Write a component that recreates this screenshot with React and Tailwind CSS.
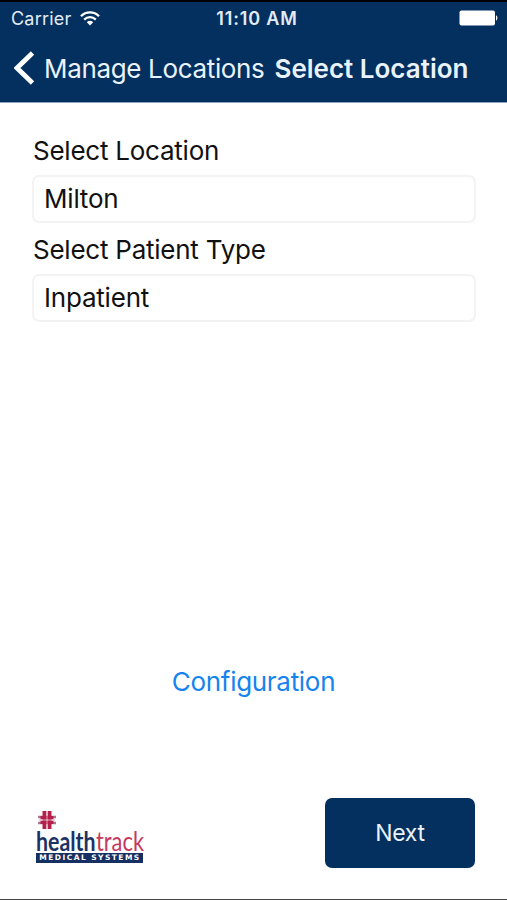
import { useState } from "react";

function StatusBar() {
  return (
    <div className="grid h-[34px] grid-cols-3 items-center border-t-2 border-black pr-[9px] pl-[11px] text-[18px] leading-none text-[#e3ecf5]">
      <div className="flex items-center gap-[9px] pt-px">
        <span className="tracking-[0.2px]">Carrier</span>
        <svg width="20" height="15" viewBox="0 0 20 15" fill="none">
          <path d="M1 5.2C6 0.2 14 0.2 19 5.2" stroke="#fff" strokeWidth="2.3" />
          <path
            d="M4.2 8.6C7.5 5.4 12.5 5.4 15.8 8.6"
            stroke="#fff"
            strokeWidth="2.2"
          />
          <path d="M6.8 11.2C8.6 9.4 11.4 9.4 13.2 11.2L10 14.4Z" fill="#fff" />
        </svg>
      </div>
      <span className="pt-px pl-[5px] text-center font-semibold tracking-[0.85px] whitespace-nowrap">
        11:10 AM
      </span>
      <svg className="justify-self-end" width="39" height="16" viewBox="0 0 39 16">
        <rect x="0.5" y="0.5" width="35.5" height="15" rx="2" fill="#fff" />
        <path d="M37 5.3C38.9 6 38.9 10 37 10.7Z" fill="#fff" />
      </svg>
    </div>
  );
}

function NavBar() {
  return (
    <div className="flex h-[68px] items-center pl-[14px] text-[26px] leading-none whitespace-nowrap text-[#eaf3fc]">
      <button className="flex items-center">
        <svg width="21" height="34" viewBox="0 0 21 34" fill="none">
          <path d="M18.5 2L3 17L18.5 32" stroke="#fff" strokeWidth="4.8" />
        </svg>
        <span className="ml-[9px] pt-px tracking-[-0.34px]">
          Manage Locations
        </span>
      </button>
      <h1 className="ml-[10px] pt-px font-semibold">Select Location</h1>
    </div>
  );
}

function Field({ label, value, onChange }) {
  return (
    <label className="block pb-px">
      <span className="block h-[50px] pt-[10px] pl-px text-[26px] leading-[32px] tracking-[-0.24px]">
        {label}
      </span>
      <input
        className="block h-[48px] w-full rounded-[7px] border-2 border-[#f3f3f3] bg-white px-[10px] pb-[2px] text-[26px] tracking-[-0.2px] outline-none"
        value={value}
        onChange={(event) => onChange(event.target.value)}
      />
    </label>
  );
}

function Logo() {
  return (
    <div className="w-[108px] pl-px">
      <svg className="ml-[2px]" width="19" height="19" viewBox="0 0 19 19">
        <path d="M0 6H18M0 12H18" stroke="#a8788f" strokeWidth="2.6" />
        <path d="M2.5 6.6H15.5M2.5 11.4H15.5" stroke="#b51f4b" strokeWidth="3.4" />
        <path d="M6.4 0V18M11.6 0V18" stroke="#b51f4b" strokeWidth="3.8" />
        <path d="M9 0V18M1 9H17" stroke="#d9a3b5" strokeWidth="1" />
      </svg>
      <div className="flex h-[23px] items-center font-['Lato',sans-serif] text-[26px] leading-[23px] whitespace-nowrap">
        <span className="w-[60px] origin-left scale-x-[0.82] font-bold text-[#1c3264]">
          health
        </span>
        <span className="w-[47px] origin-left scale-x-[0.84] text-[#c43a5f]">
          track
        </span>
      </div>
      <div className="flex h-[10px] items-center justify-center bg-[#173063] pl-px font-['DejaVu_Sans',sans-serif] text-[7.5px] leading-[10px] font-bold tracking-[1.45px] whitespace-nowrap text-white">
        MEDICAL SYSTEMS
      </div>
    </div>
  );
}

export default function App() {
  const [location, setLocation] = useState("Milton");
  const [patientType, setPatientType] = useState("Inpatient");

  return (
    <main className="flex h-[900px] w-[507px] flex-col overflow-hidden border-b border-[#454545] bg-white font-['Inter',sans-serif] text-[#111]">
      <header className="h-[103px] shrink-0 border-b border-[#8fa5bb] bg-[#03305f]">
        <StatusBar />
        <NavBar />
      </header>

      <div className="pt-[22px] pr-[31px] pl-8">
        <Field label="Select Location" value={location} onChange={setLocation} />
        <Field
          label="Select Patient Type"
          value={patientType}
          onChange={setPatientType}
        />
      </div>

      <div className="mt-auto flex justify-center">
        <button className="text-[26px] leading-[32px] tracking-[-0.3px] text-[#1683ee]">
          Configuration
        </button>
      </div>

      <footer className="mt-[100px] mb-[31px] flex items-end justify-between pr-8 pl-[35px]">
        <div className="pb-[5px]">
          <Logo />
        </div>
        <button className="h-[70px] w-[150px] rounded-[7px] bg-[#03305f] pt-px text-[23px] tracking-[-0.3px] text-[#eaf3fc]">
          Next
        </button>
      </footer>
    </main>
  );
}
